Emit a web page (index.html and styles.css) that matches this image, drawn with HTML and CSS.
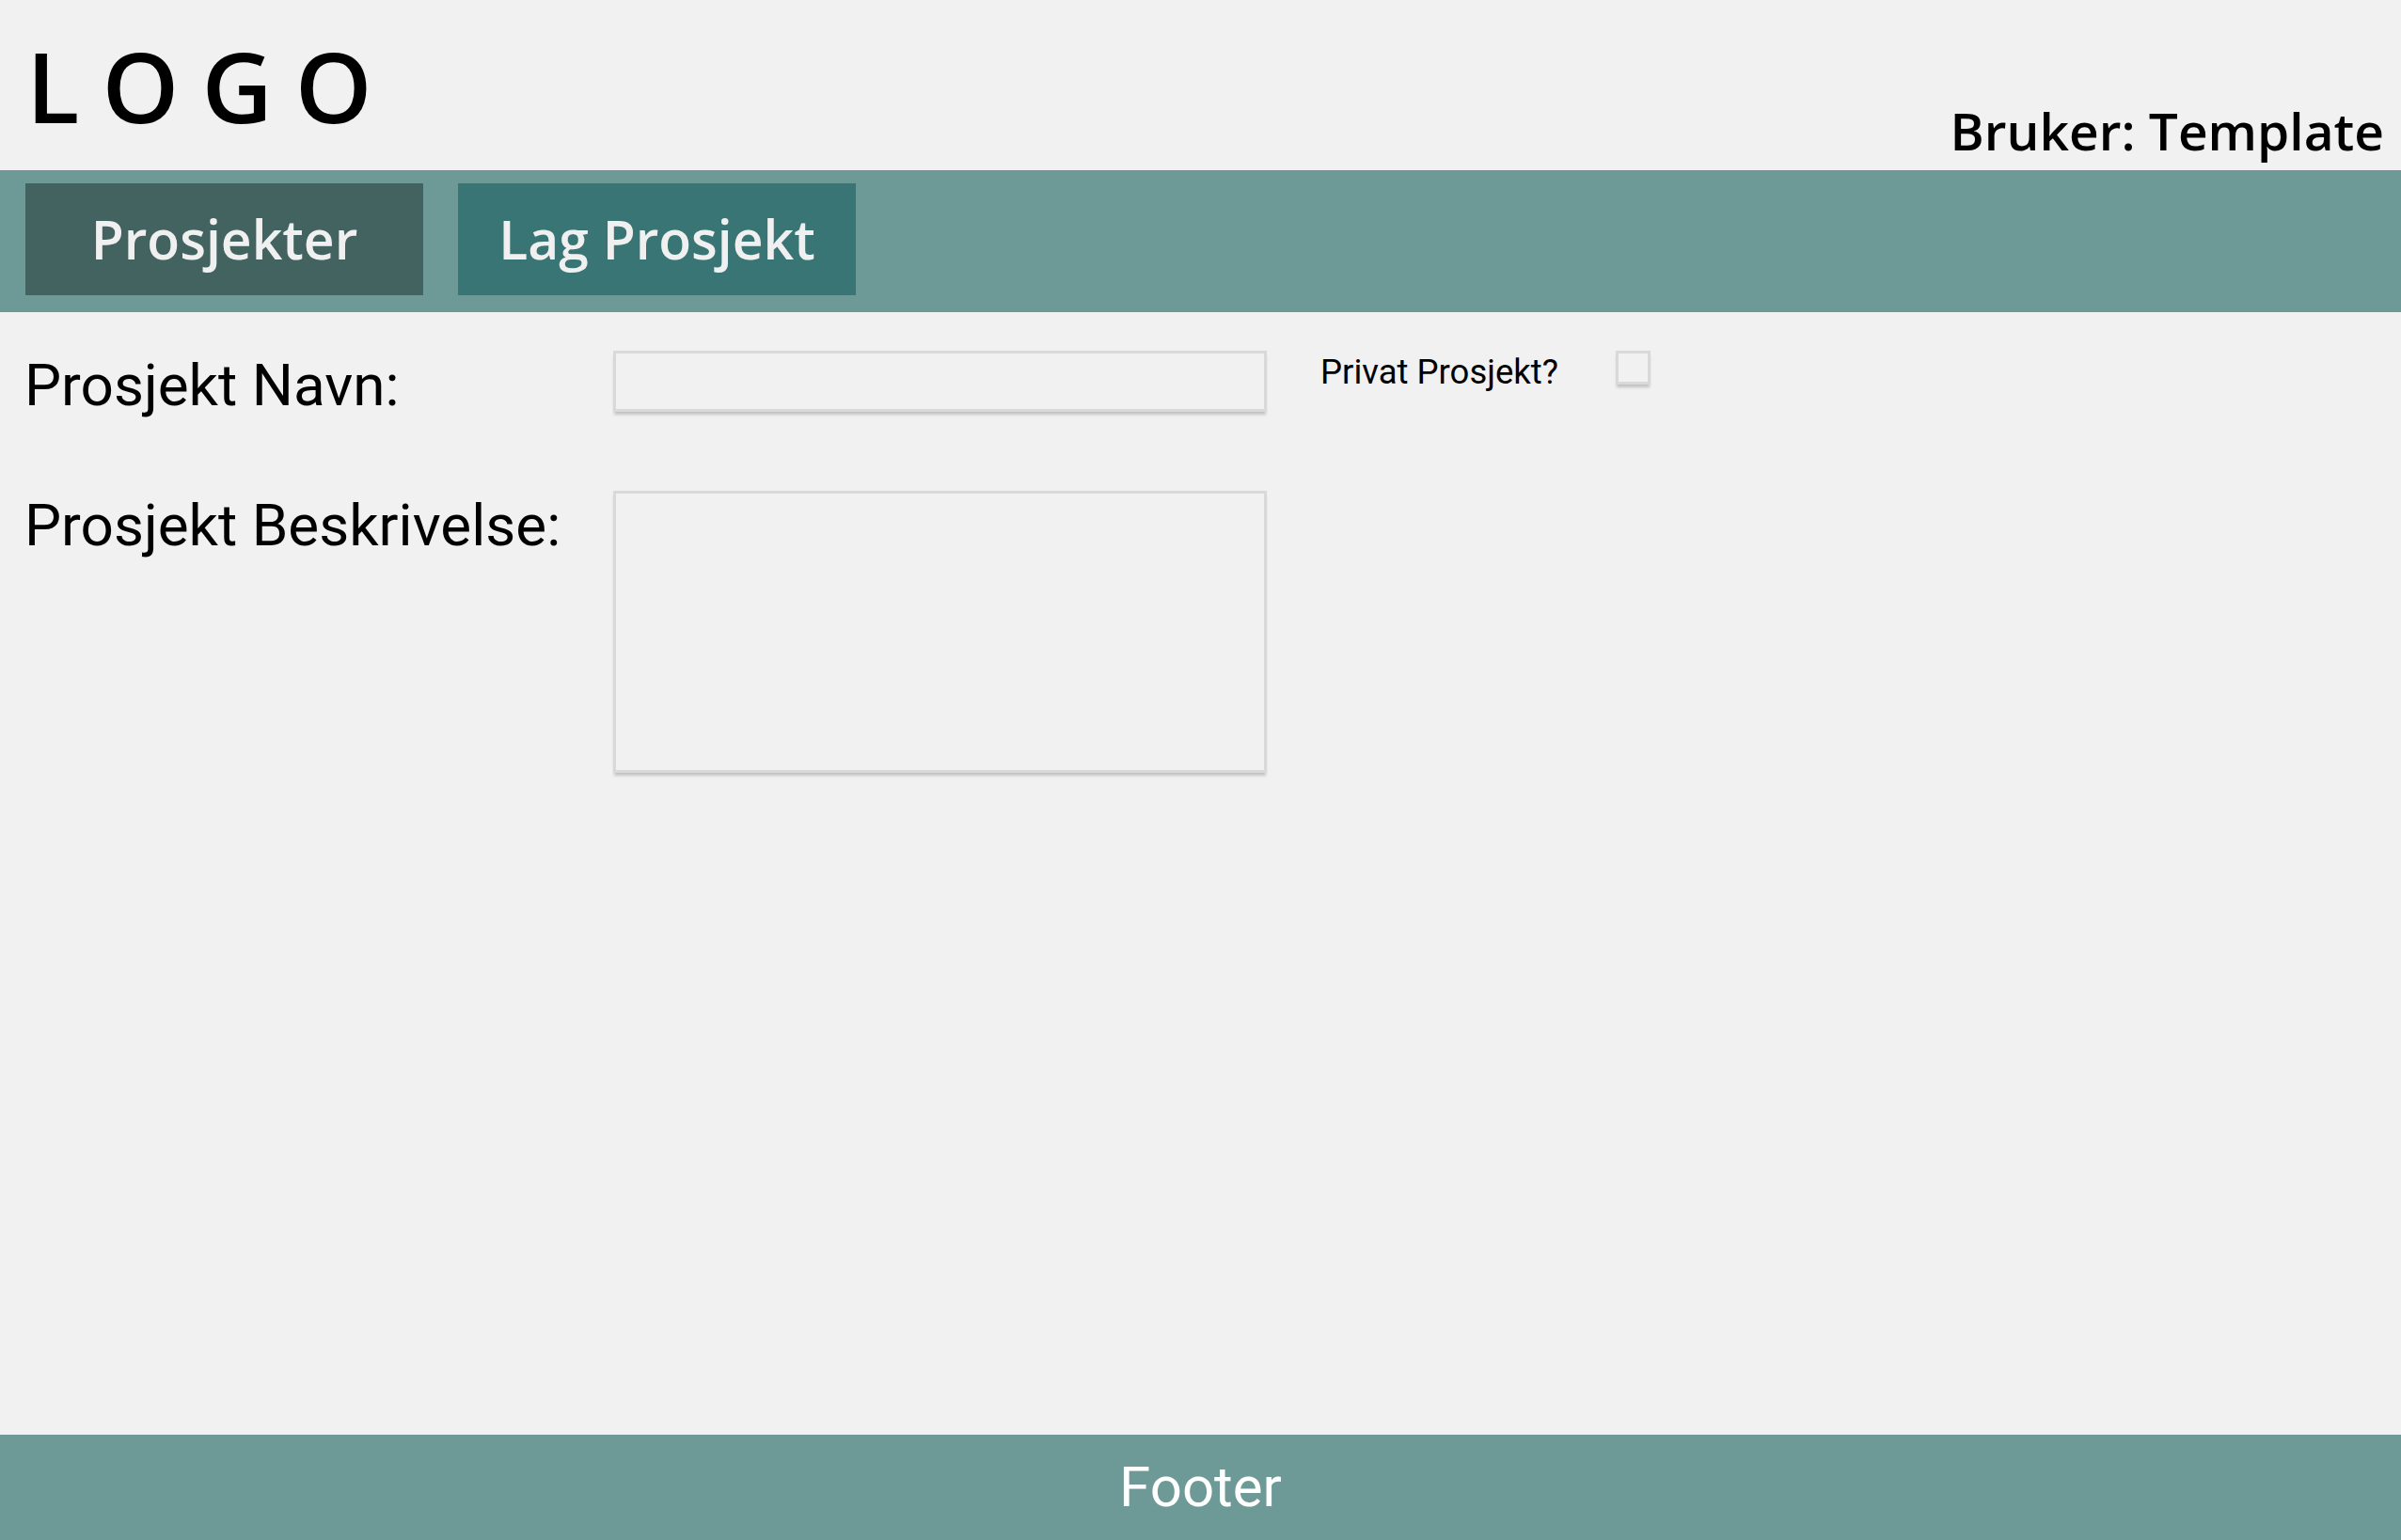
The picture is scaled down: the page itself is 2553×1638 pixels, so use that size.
FILE: index.html
```html
<!DOCTYPE html>
<html lang="no">
<head>
<meta charset="utf-8">
<title>Lag Prosjekt</title>
<link rel="stylesheet" href="styles.css">
</head>
<body>
<div class="page">
  <header class="header">
    <div class="logo">LOGO</div>
    <div class="user">Bruker: Template</div>
  </header>
  <nav class="nav">
    <a class="tab tab-dark">Prosjekter</a>
    <a class="tab tab-teal">Lag Prosjekt</a>
  </nav>
  <main class="main">
    <form class="form">
      <label class="label" for="navn">Prosjekt Navn:</label>
      <input class="field field-input" id="navn" type="text">
      <label class="privat" for="privat">Privat Prosjekt?</label>
      <input class="check" id="privat" type="checkbox">
      <label class="label" for="beskrivelse">Prosjekt Beskrivelse:</label>
      <textarea class="field field-area" id="beskrivelse"></textarea>
    </form>
  </main>
  <footer class="footer">Footer</footer>
</div>
</body>
</html>
```
FILE: styles.css
```css
html, body {
  margin: 0;
  padding: 0;
  background: #f1f1f1;
}

.page {
  display: flex;
  flex-direction: column;
  height: 100vh;
  background: #f1f1f1;
}

.header {
  height: 181px;
  box-sizing: border-box;
  display: flex;
  justify-content: space-between;
  align-items: flex-start;
  padding: 0 18px 15px 28px;
  font-family: "Open Sans", "Noto Sans", sans-serif;
  color: #000;
}

.logo {
  margin-top: 39px;
  font-size: 104px;
  line-height: 104px;
  font-weight: 600;
  letter-spacing: 24px;
}

.user {
  align-self: flex-end;
  font-size: 55px;
  line-height: 55px;
  font-weight: 600;
}

.nav {
  height: 151px;
  box-sizing: border-box;
  background: #6d9a97;
  display: flex;
  gap: 37px;
  padding: 14px 0 18px 27px;
}

.tab {
  width: 423px;
  height: 119px;
  display: flex;
  justify-content: center;
  font-family: "Open Sans", "Noto Sans", sans-serif;
  font-size: 57px;
  line-height: 119px;
  font-weight: 600;
  color: #f0f0f0;
}

.tab-dark {
  background: #426360;
}

.tab-teal {
  background: #387574;
}

.main {
  flex: 1;
  padding: 41px 0 0 26px;
}

.form {
  display: grid;
  grid-template-columns: 626px 695px auto auto;
  justify-content: start;
  align-items: start;
  row-gap: 76px;
  font-family: Roboto, "Liberation Sans", sans-serif;
}

.label {
  font-size: 62px;
  line-height: normal;
  color: #000;
}

.field {
  display: block;
  box-sizing: border-box;
  width: 695px;
  margin: 0;
  border: 3px solid #d9d9d9;
  background: #f1f1f1;
  box-shadow: 0 4px 3px -1px rgba(0, 0, 0, 0.2);
  outline: none;
  resize: none;
  font-family: Roboto, sans-serif;
}

.field-input {
  height: 65px;
}

.field-area {
  height: 300px;
}

.privat {
  margin-left: 57px;
  margin-top: 1px;
  font-size: 36.5px;
  line-height: normal;
  color: #000;
}

.check {
  appearance: none;
  -webkit-appearance: none;
  box-sizing: border-box;
  width: 37px;
  height: 36px;
  margin: 0 0 0 61px;
  border: 3px solid #d9d9d9;
  background: #f1f1f1;
  box-shadow: 0 4px 3px -1px rgba(0, 0, 0, 0.2);
}

.footer {
  height: 112px;
  background: #6d9a97;
  color: #fff;
  text-align: center;
  font-family: Roboto, "Liberation Sans", sans-serif;
  font-size: 60px;
  line-height: 112px;
}
```
